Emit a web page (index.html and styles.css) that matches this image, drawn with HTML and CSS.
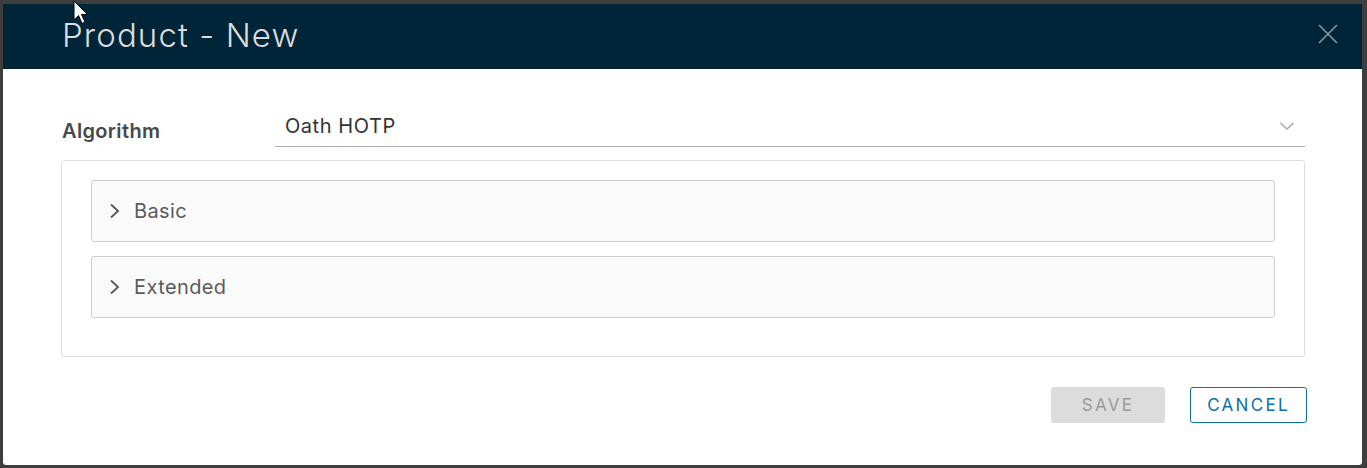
FILE: index.html
```html
<!DOCTYPE html>
<html>
<head>
<meta charset="utf-8">
<link rel="stylesheet" href="styles.css">
</head>
<body>
<div class="backdrop">
  <div class="modal">
    <div class="modal-header">
      <h1 class="modal-title">Product - New</h1>
      <button class="close" aria-label="Close">
        <svg width="20" height="20" viewBox="0 0 20 20"><path d="M1 1 L19 19 M19 1 L1 19" stroke="#8a969e" stroke-width="1.6" fill="none"/></svg>
      </button>
    </div>
    <div class="modal-body">
      <div class="form-row">
        <label class="form-label">Algorithm</label>
        <div class="select">
          <span class="select-value">Oath HOTP</span>
          <svg class="select-caret" width="16" height="10" viewBox="0 0 16 10"><path d="M1.5 2 L8 8 L14.5 2" stroke="#a8a8a8" stroke-width="1.6" fill="none"/></svg>
        </div>
      </div>
      <div class="panel">
        <div class="accordion">
          <svg class="acc-caret" width="12" height="16" viewBox="0 0 12 16"><path d="M2 1.5 L9 8 L2 14.5" stroke="#5a5a5a" stroke-width="1.9" fill="none"/></svg>
          <span class="acc-title">Basic</span>
        </div>
        <div class="accordion">
          <svg class="acc-caret" width="12" height="16" viewBox="0 0 12 16"><path d="M2 1.5 L9 8 L2 14.5" stroke="#5a5a5a" stroke-width="1.9" fill="none"/></svg>
          <span class="acc-title">Extended</span>
        </div>
      </div>
    </div>
    <div class="modal-footer">
      <button class="btn btn-disabled">SAVE</button>
      <button class="btn btn-outline">CANCEL</button>
    </div>
  </div>
  <svg class="cursor" width="16" height="26" viewBox="0 0 16 26"><path d="M1 1 L1 20 L5.5 15.5 L9 23.5 L12 22 L8.5 14.5 L14.5 14.5 Z" fill="#fff" stroke="#000" stroke-width="1"/></svg>
</div>
</body>
</html>
```

FILE: styles.css
```css
* { box-sizing: border-box; }
html, body { margin: 0; padding: 0; }
body {
  background: #3e3e3e;
  font-family: Inter, Lato, sans-serif;
  width: 1367px;
  height: 468px;
  overflow: hidden;
}
.backdrop {
  position: relative;
  padding: 4px 5px 3px 3px;
  height: 468px;
}
.modal {
  background: #fff;
  height: 461px;
  border-radius: 0 0 3px 3px;
  display: flex;
  flex-direction: column;
  overflow: hidden;
}
.modal-header {
  background: #002538;
  height: 65px;
  display: flex;
  align-items: center;
  justify-content: space-between;
  padding: 0 24px 0 59px;
}
.modal-title {
  margin: 0;
  font-weight: 300;
  font-size: 33px;
  color: #dcdcdc;
  letter-spacing: 1.1px;
  padding-bottom: 4px;
}
.close {
  background: none;
  border: 0;
  padding: 0;
  margin-bottom: 6px;
  display: flex;
}
.modal-body {
  padding: 41px 57px 0 58px;
}
.form-row {
  display: flex;
  align-items: flex-end;
  height: 37px;
}
.form-label {
  width: 214px;
  padding-left: 1px;
  font-size: 20px;
  font-weight: 600;
  color: #484848;
  padding-bottom: 4px;
  letter-spacing: 0.35px;
}
.select {
  flex: 1;
  height: 37px;
  border-bottom: 1px solid #b0b0b0;
  display: flex;
  align-items: center;
  justify-content: space-between;
  padding: 0 10px 5px 10px;
}
.select-value {
  font-size: 20px;
  color: #333;
  letter-spacing: 0.55px;
}
.select-caret { margin-bottom: 0; }
.panel {
  margin-top: 13px;
  border: 1px solid #dedede;
  border-radius: 3px;
  padding: 19px 29px 38px 29px;
  display: flex;
  flex-direction: column;
  gap: 14px;
}
.accordion {
  height: 62px;
  background: #fafafa;
  border: 1px solid #cfcfcf;
  border-radius: 3px;
  display: flex;
  align-items: center;
  padding-left: 17px;
}
.acc-caret { margin-right: 13px; }
.acc-title {
  font-size: 20px;
  color: #5a5a5a;
  letter-spacing: 0.4px;
}
.modal-footer {
  display: flex;
  justify-content: flex-end;
  gap: 25px;
  padding: 30px 55px 0 0;
}
.btn {
  height: 36px;
  border-radius: 3px;
  font-family: Inter, Lato, sans-serif;
  font-size: 17px;
  letter-spacing: 2.3px;
  padding: 0;
}
.btn-disabled {
  width: 114px;
  background: #dcdcdc;
  border: 0;
  color: #9a9a9a;
}
.btn-outline {
  width: 117px;
  background: #fff;
  border: 1px solid #0c72a6;
  color: #0c72a6;
}
.cursor {
  position: absolute;
  left: 73px;
  top: 0;
}
```
